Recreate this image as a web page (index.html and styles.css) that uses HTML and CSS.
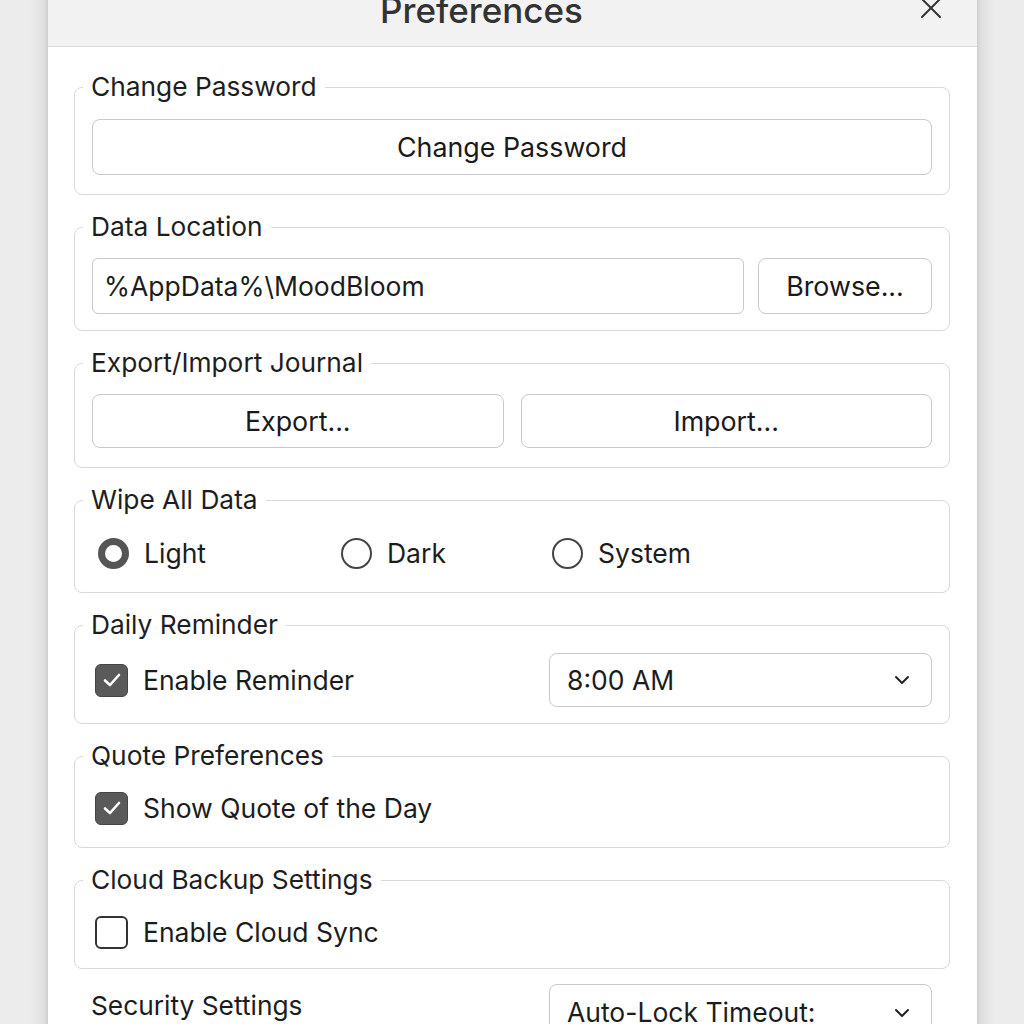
FILE: index.html
```html
<!DOCTYPE html>
<html>
<head>
<meta charset="utf-8">
<link rel="stylesheet" href="styles.css">
</head>
<body>
<div class="dialog">
  <div class="titlebar">
    <div class="title">Preferences</div>
    <button class="close" aria-label="Close">
      <svg width="22" height="22" viewBox="0 0 22 22"><path d="M2 2 L20 20 M20 2 L2 20" stroke="#333" stroke-width="2" fill="none" stroke-linecap="round"/></svg>
    </button>
  </div>
  <div class="content">
    <fieldset class="group g-pass">
      <legend>Change Password</legend>
      <button class="btn full">Change Password</button>
    </fieldset>

    <fieldset class="group g-data">
      <legend>Data Location</legend>
      <div class="row data-row">
        <div class="input">%AppData%\MoodBloom</div>
        <button class="btn browse">Browse...</button>
      </div>
    </fieldset>

    <fieldset class="group g-export">
      <legend>Export/Import Journal</legend>
      <div class="row two">
        <button class="btn">Export...</button>
        <button class="btn">Import...</button>
      </div>
    </fieldset>

    <fieldset class="group g-wipe">
      <legend>Wipe All Data</legend>
      <div class="radios">
        <label class="radio-opt"><span class="radio on"></span>Light</label>
        <label class="radio-opt"><span class="radio"></span>Dark</label>
        <label class="radio-opt"><span class="radio"></span>System</label>
      </div>
    </fieldset>

    <fieldset class="group g-remind">
      <legend>Daily Reminder</legend>
      <div class="row remind-row">
        <label class="check-opt"><span class="check on"><svg width="22" height="22" viewBox="0 0 22 22"><path d="M4 11.5 L9 16 L18 6" stroke="#fff" stroke-width="2.6" fill="none" stroke-linecap="round" stroke-linejoin="round"/></svg></span>Enable Reminder</label>
        <div class="select"><span>8:00 AM</span><svg class="chev" width="16" height="10" viewBox="0 0 16 10"><path d="M2 2 L8 8 L14 2" stroke="#222" stroke-width="2" fill="none" stroke-linecap="round" stroke-linejoin="round"/></svg></div>
      </div>
    </fieldset>

    <fieldset class="group g-quote">
      <legend>Quote Preferences</legend>
      <label class="check-opt"><span class="check on"><svg width="22" height="22" viewBox="0 0 22 22"><path d="M4 11.5 L9 16 L18 6" stroke="#fff" stroke-width="2.6" fill="none" stroke-linecap="round" stroke-linejoin="round"/></svg></span>Show Quote of the Day</label>
    </fieldset>

    <fieldset class="group g-cloud">
      <legend>Cloud Backup Settings</legend>
      <label class="check-opt"><span class="check"></span>Enable Cloud Sync</label>
    </fieldset>

    <div class="security">
      <div class="sec-label">Security Settings</div>
      <div class="select sec-select"><span>Auto-Lock Timeout:</span><svg class="chev" width="16" height="10" viewBox="0 0 16 10"><path d="M2 2 L8 8 L14 2" stroke="#222" stroke-width="2" fill="none" stroke-linecap="round" stroke-linejoin="round"/></svg></div>
    </div>
  </div>
</div>
</body>
</html>
```

FILE: styles.css
```css
* { box-sizing: border-box; }
html, body { margin: 0; padding: 0; }
body {
  background: #ececec;
  font-family: Inter, "Noto Sans", "Liberation Sans", sans-serif;
  color: #1c1c1c;
  height: 1024px;
  overflow: hidden;
}
.dialog {
  margin: -20px 0 0 48px;
  width: 929px;
  background: #fff;
  box-shadow: 0 0 18px rgba(0,0,0,0.18), 0 0 4px rgba(0,0,0,0.08);
  height: 1100px;
}
.titlebar {
  height: 67px;
  background: #f2f2f2;
  border-bottom: 1px solid #dcdcdc;
  display: flex;
  align-items: flex-start;
  justify-content: center;
  padding-top: 9px;
  position: relative;
}
.title {
  font-size: 35px;
  line-height: 42px;
  font-weight: 500;
  color: #333;
  margin-left: -62px;
}
.close {
  position: absolute;
  right: 35px;
  top: 17px;
  border: none;
  background: none;
  padding: 0;
  width: 22px;
  height: 22px;
}
.content {
  padding: 25px 27px 0 26px;
  display: flex;
  flex-direction: column;
  gap: 17px;
}
.group {
  margin: 0;
  border: 1px solid #d9d9d9;
  border-radius: 8px;
  padding: 16px 17px 17px 17px;
  min-width: 0;
}
.group legend {
  font-size: 26.3px;
  line-height: 30px;
  padding: 0 8px;
  margin-left: -9px;
  color: #1e1e1e;
}
.btn {
  font-family: inherit;
  font-size: 26.8px;
  color: #1a1a1a;
  background: #fff;
  border: 1px solid #c9c9c9;
  border-radius: 8px;
  height: 56px;
  padding: 0 16px;
}
.full { width: 100%; display: block; }
.g-pass { padding-top: 17px; padding-bottom: 19px; }
.row { display: flex; align-items: center; }
.data-row { gap: 14px; }
.input {
  flex: 1;
  height: 56px;
  border: 1px solid #c9c9c9;
  border-radius: 6px;
  font-size: 26.5px;
  display: flex;
  align-items: center;
  padding-left: 11px;
}
.browse { width: 174px; flex: none; }
.g-data { padding-top: 16px; padding-bottom: 16px; }
.two { gap: 17px; }
.two .btn { flex: 1; height: 54px; }
.g-export { padding-bottom: 19px; }
.radios {
  display: grid;
  grid-template-columns: 243px 211px auto;
  height: 44px;
  align-items: center;
  padding-left: 6px;
}
.radio-opt {
  display: flex;
  align-items: center;
  font-size: 26.5px;
  gap: 15px;
}
.radio {
  width: 31px;
  height: 31px;
  border-radius: 50%;
  border: 2px solid #444;
  background: #fff;
  flex: none;
}
.radio.on { border: 7.5px solid #555; width: 31px; height: 31px; }
.g-wipe { padding-bottom: 17px; }
.check-opt {
  display: flex;
  align-items: center;
  gap: 15px;
  font-size: 26.5px;
  padding-left: 3px;
  height: 42px;
}
.check {
  width: 33px;
  height: 33px;
  border-radius: 6px;
  border: 2.5px solid #333;
  background: #fff;
  display: flex;
  align-items: center;
  justify-content: center;
  flex: none;
}
.check.on { background: #5a5a5a; border: 1.5px solid #444; }
.g-remind { padding-top: 13px; padding-bottom: 16px; }
.remind-row { justify-content: space-between; }
.select {
  width: 383px;
  height: 54px;
  border: 1px solid #c9c9c9;
  border-radius: 8px;
  display: flex;
  align-items: center;
  justify-content: space-between;
  padding: 0 21px 0 17px;
  font-size: 26.5px;
}
.g-quote { padding-bottom: 18px; }
.g-cloud { padding-bottom: 15px; }
.security {
  display: flex;
  justify-content: space-between;
  align-items: flex-start;
  padding-left: 17px;
  padding-right: 18px;
}
.sec-label {
  font-size: 26.3px;
  padding-top: 5px;
  line-height: 30px;
}
.sec-select {
  height: 60px;
  align-items: flex-start;
  padding-top: 12px;
  line-height: 30px;
  margin-top: -2px;
}
.sec-select .chev { margin-top: 11px; }
```
